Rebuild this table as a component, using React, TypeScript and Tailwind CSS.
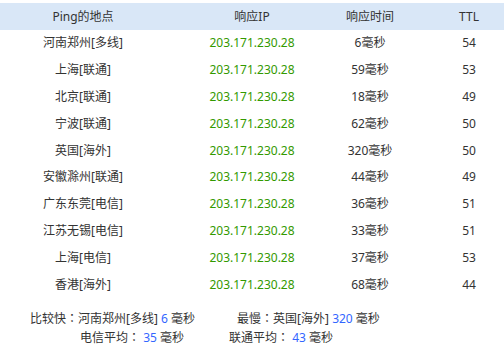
const rows = [
  { place: "河南郑州[多线]", ip: "203.171.230.28", time: "6毫秒", ttl: "54" },
  { place: "上海[联通]", ip: "203.171.230.28", time: "59毫秒", ttl: "53" },
  { place: "北京[联通]", ip: "203.171.230.28", time: "18毫秒", ttl: "49" },
  { place: "宁波[联通]", ip: "203.171.230.28", time: "62毫秒", ttl: "50" },
  { place: "英国[海外]", ip: "203.171.230.28", time: "320毫秒", ttl: "50" },
  { place: "安徽滁州[联通]", ip: "203.171.230.28", time: "44毫秒", ttl: "49" },
  { place: "广东东莞[电信]", ip: "203.171.230.28", time: "36毫秒", ttl: "51" },
  { place: "江苏无锡[电信]", ip: "203.171.230.28", time: "33毫秒", ttl: "51" },
  { place: "上海[电信]", ip: "203.171.230.28", time: "37毫秒", ttl: "53" },
  { place: "香港[海外]", ip: "203.171.230.28", time: "68毫秒", ttl: "44" },
];

const font = { fontFamily: '"Noto Sans", "Noto Sans CJK SC", sans-serif' };
const colonFont = { fontFamily: '"Noto Sans CJK TC", sans-serif' };

function Colon() {
  return <span style={colonFont}>：</span>;
}

export default function App() {
  return (
    <div className="w-[504px] h-[351px] bg-white text-[12px] text-[#333] pt-[3px]" style={font}>
      <div className="grid grid-cols-[166px_172px_64px_102px] h-[27px] items-center bg-[#d9e7f7]">
        <div className="text-center">Ping的地点</div>
        <div className="text-center">响应IP</div>
        <div className="text-center">响应时间</div>
        <div className="text-center pl-8">TTL</div>
      </div>
      {rows.map((r, i) => (
        <div key={i} className="grid grid-cols-[166px_172px_64px_102px] h-[26.8px] items-center">
          <div className="text-center">{r.place}</div>
          <div className="text-center text-[#339900]">{r.ip}</div>
          <div className="text-center whitespace-nowrap">{r.time}</div>
          <div className="text-center pl-8">{r.ttl}</div>
        </div>
      ))}
      <div className="mt-[12px] flex flex-col gap-[2px] leading-[16px]">
        <div className="flex pl-[30px] gap-[42px]">
          <span>
            比较快<Colon />河南郑州[多线] <span className="text-[#3366ff]">6</span> 毫秒
          </span>
          <span>
            最慢<Colon />英国[海外] <span className="text-[#3366ff]">320</span> 毫秒
          </span>
        </div>
        <div className="flex pl-[80px] gap-[45px]">
          <span>
            电信平均<Colon /> <span className="text-[#3366ff]">35</span> 毫秒
          </span>
          <span>
            联通平均<Colon /> <span className="text-[#3366ff]">43</span> 毫秒
          </span>
        </div>
      </div>
    </div>
  );
}
